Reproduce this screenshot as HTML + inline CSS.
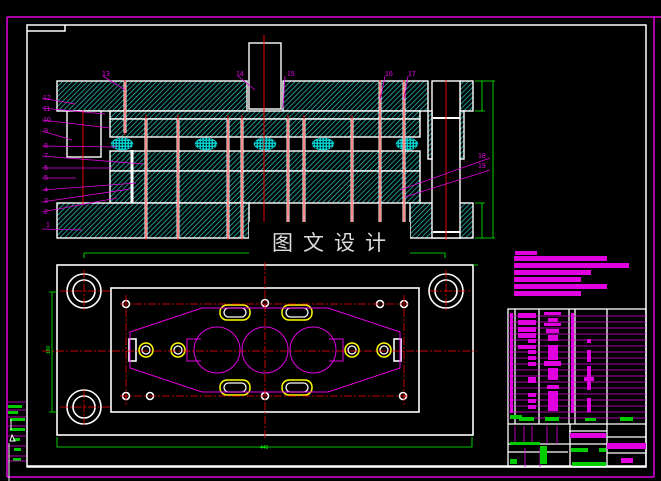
<!DOCTYPE html>
<html><head><meta charset="utf-8"><style>
html,body{margin:0;padding:0;background:#000;width:661px;height:481px;overflow:hidden}
svg{display:block}
</style></head><body>
<svg width="661" height="481" viewBox="0 0 661 481" xmlns="http://www.w3.org/2000/svg">
<defs>
<pattern id="h" width="3.5" height="3.5" patternUnits="userSpaceOnUse" patternTransform="rotate(45)">
<rect width="3.5" height="3.5" fill="#000"/><line x1="0" y1="0" x2="0" y2="3.5" stroke="#2cd0d0" stroke-width="1.4"/>
</pattern>
<pattern id="x" width="3" height="3" patternUnits="userSpaceOnUse">
<rect width="3" height="3" fill="#0cc"/><rect width="1.5" height="1.5" fill="#000"/>
</pattern>
</defs>
<rect width="661" height="481" fill="#000"/>
<path d="M7 17H661 M7 17V477 M7 477H654 M654 17V477" stroke="#e000e0" stroke-width="1.5" fill="none"/>
<rect x="27" y="25" width="619" height="442" fill="none" stroke="#fff" stroke-width="1.5"/>
<path d="M27 31H65V25" stroke="#fff" stroke-width="1.5" fill="none"/>
<g fill="#0c0"><rect x="8" y="405" width="14" height="3"/><rect x="8" y="411" width="10" height="3"/><rect x="10" y="418" width="15" height="3"/><rect x="10" y="428" width="15" height="3"/><rect x="13" y="438" width="7" height="3"/><rect x="14" y="448" width="7" height="3"/><rect x="13" y="458" width="8" height="3"/></g>
<path d="M8 402H26M8 410H26M8 417H26M8 426H26M8 436H26M8 446H26M8 456H26M8 461H26" stroke="#d0d" stroke-width="0.8"/>
<path d="M10 441H15L12 435Z M11 419V430" stroke="#fff" fill="none" stroke-width="1"/>
<path d="M9 443V481" stroke="#fff" stroke-width="1"/>

<g stroke="#fff" stroke-width="1.4">
<rect x="57" y="81" width="190" height="30" fill="url(#h)"/>
<rect x="283" y="81" width="145" height="30" fill="url(#h)"/>
<rect x="460" y="81" width="13" height="30" fill="url(#h)"/>
<rect x="110" y="111" width="310" height="8" fill="url(#h)"/>
<rect x="110" y="119" width="310" height="18" fill="url(#h)"/>
<rect x="110" y="151" width="310" height="20" fill="url(#h)"/>
<rect x="110" y="171" width="310" height="32" fill="url(#h)"/>
<rect x="57" y="203" width="192" height="35" fill="url(#h)"/>
<rect x="410" y="203" width="63" height="35" fill="url(#h)"/>
<rect x="67" y="111" width="34" height="46" fill="#000"/>
<rect x="249" y="43" width="32" height="66" fill="#000"/>
<rect x="432" y="81" width="28" height="157" fill="#000"/>
<rect x="428" y="111" width="4" height="48" fill="url(#h)"/>
<rect x="460" y="111" width="4" height="48" fill="url(#h)"/>
</g>
<path d="M433 118H460M433 232H460" stroke="#fff" stroke-width="2"/>
<g fill="url(#x)" stroke="#0dd" stroke-width="0.5">
<ellipse cx="122" cy="144" rx="11" ry="6"/><ellipse cx="206" cy="144" rx="11" ry="6"/><ellipse cx="265" cy="144" rx="11" ry="6"/><ellipse cx="323" cy="144" rx="11" ry="6"/><ellipse cx="407" cy="144" rx="11" ry="6"/>
</g>
<g stroke="#fff" stroke-width="3">
<path d="M125 82V133M146 119V238M178 119V238M228 119V238M242 119V238M288 119V238M304 119V238M352 119V238M380 82V238M404 82V238M132 150V203"/>
</g>
<g stroke="#f00" stroke-width="0.9">
<path d="M125 80V135M146 115V240M178 115V240M228 115V240M242 115V240M288 115V240M304 115V240M352 115V240M380 80V240M404 80V240M83 110V205M264 35V225M446 80V240"/>
</g>
<g stroke="#e000e0" stroke-width="0.8" fill="none">
<path d="M42 98L75 104M42 108L105 114M42 120L110 128M42 131L72 140M42 146L117 147M42 156L143 164M42 168L112 168M42 178L76 178M42 190L136 183M42 202L130 189M42 212L117 198M42 229L82 230M103 76L125 90M238 76L255 90M285 76L283 108M385 76L380 100M408 76L404 100M490 158L400 190M490 170L405 197"/>
</g>
<g fill="#e000e0" font-family="Liberation Sans,sans-serif" font-size="7">
<text x="43" y="100">12</text><text x="43" y="111">11</text><text x="43" y="122">10</text><text x="44" y="133">9</text><text x="44" y="148">8</text><text x="44" y="158">7</text><text x="44" y="170">6</text><text x="44" y="180">5</text><text x="44" y="192">4</text><text x="44" y="203">3</text><text x="44" y="214">2</text><text x="46" y="227">1</text>
<text x="102" y="76">13</text><text x="236" y="76">14</text><text x="287" y="76">15</text><text x="385" y="76">16</text><text x="408" y="76">17</text><text x="478" y="158">18</text><text x="478" y="168">19</text>
</g>
<g stroke="#0f0" stroke-width="0.8" fill="none"><path d="M475 81H495M475 111H485M475 203H485M475 238H495M493 81V238M482 81V111M482 203V238M84 258V253H249M410 253H445V258"/></g>
<rect x="249" y="222" width="161" height="36" fill="#000"/>
<text x="272" y="250" fill="#ddd" font-family="Liberation Sans,'Noto Sans CJK SC',sans-serif" font-size="21" letter-spacing="10">图文设计</text>

<g fill="none" stroke="#fff" stroke-width="1.6">
<rect x="57" y="265" width="416" height="170"/>
<rect x="111" y="288" width="308" height="124"/>
<circle cx="84" cy="291" r="17"/><circle cx="84" cy="291" r="11"/>
<circle cx="446" cy="291" r="17"/><circle cx="446" cy="291" r="11"/>
<circle cx="84" cy="407" r="17"/><circle cx="84" cy="407" r="11"/>
<circle cx="126" cy="304" r="3.5"/><circle cx="265" cy="303" r="3.5"/><circle cx="380" cy="304" r="3.5"/><circle cx="150" cy="396" r="3.5"/><circle cx="403" cy="396" r="3.5"/><circle cx="126" cy="396" r="3.5"/><circle cx="265" cy="396" r="3.5"/><circle cx="404" cy="304" r="3.5"/>
<rect x="129" y="339" width="7" height="22"/><rect x="394" y="339" width="7" height="22"/>
</g>
<g fill="none" stroke="#ff0" stroke-width="1.5">
<rect x="220" y="305" width="30" height="15" rx="7"/><rect x="282" y="305" width="30" height="15" rx="7"/>
<rect x="220" y="380" width="30" height="15" rx="7"/><rect x="282" y="380" width="30" height="15" rx="7"/>
<circle cx="146" cy="350" r="7"/><circle cx="178" cy="350" r="7"/><circle cx="352" cy="350" r="7"/><circle cx="384" cy="350" r="7"/>
</g>
<g fill="none" stroke="#fff" stroke-width="1.3">
<rect x="224" y="308" width="22" height="9" rx="4.5"/><rect x="286" y="308" width="22" height="9" rx="4.5"/>
<rect x="224" y="383" width="22" height="9" rx="4.5"/><rect x="286" y="383" width="22" height="9" rx="4.5"/>
<circle cx="146" cy="350" r="4"/><circle cx="178" cy="350" r="4"/><circle cx="352" cy="350" r="4"/><circle cx="384" cy="350" r="4"/>
</g>
<g fill="none" stroke="#e000e0" stroke-width="1">
<path d="M130 332L202 308H328L400 332V368L328 392H202L130 368Z"/>
<circle cx="217" cy="350" r="23"/><circle cx="265" cy="350" r="23"/><circle cx="313" cy="350" r="23"/>
<path d="M201 339H187V361H201M329 339H343V361H329"/>
</g>
<g stroke="#f00" stroke-width="0.8" stroke-dasharray="8 2 2 2">
<path d="M42 351H477M265 262V440M120 304H410M120 396H410M126 295V405M404 295V405M84 270V310M60 291H110M430 291H470M446 270V310M84 390V425M60 407H110"/>
</g>
<g stroke="#0f0" stroke-width="0.8" fill="none"><path d="M52 292V412M49 292H57M49 412H57M57 437V447H472V437M473 265H478"/></g>
<text x="50" y="354" fill="#0f0" font-size="5" font-family="Liberation Sans,sans-serif" transform="rotate(-90 50 354)">180</text>
<text x="260" y="449" fill="#0f0" font-size="5" font-family="Liberation Sans,sans-serif">440</text>
<path d="M27 466H646" stroke="#fff" stroke-width="1.5"/>

<g fill="#e000e0">
<rect x="515" y="251" width="22" height="4"/>
<rect x="514" y="256" width="93" height="5"/><rect x="514" y="263" width="115" height="5"/><rect x="514" y="270" width="77" height="5"/><rect x="514" y="277" width="67" height="5"/><rect x="514" y="284" width="93" height="5"/><rect x="514" y="291" width="67" height="5"/>
</g>
<g fill="none" stroke="#fff" stroke-width="1.3">
<rect x="508" y="309" width="138" height="158"/>
<path d="M515 309V424M539 309V424M569 309V424M575 309V424M607 309V424M508 424H646M508 444H646M508 452H568M569 431H607M607 437H646M607 453H646M570 424V467M607 424V467"/>
</g>
<g stroke="#e000e0" stroke-width="0.8">
<path d="M508 316H646M508 322H646M508 328H646M508 334H646M508 340H646M508 346H646M508 352H646M508 358H646M508 364H646M508 370H646M508 376H646M508 382H646M508 388H646M508 394H646M508 400H646M508 406H646M508 412H646M508 418H646"/>
<path d="M515 426V444M524 426V444M532 426V444M547 426V444M557 426V444M525 448V467M540 448V467"/>
</g>
<g fill="#e000e0">
<rect x="518" y="313" width="18" height="5"/><rect x="518" y="320" width="18" height="5"/><rect x="518" y="327" width="18" height="5"/><rect x="518" y="333" width="18" height="5"/><rect x="528" y="339" width="8" height="4"/><rect x="518" y="345" width="18" height="4"/><rect x="528" y="350" width="8" height="4"/><rect x="528" y="356" width="8" height="4"/><rect x="528" y="362" width="8" height="4"/><rect x="528" y="377" width="8" height="6"/><rect x="528" y="393" width="8" height="4"/><rect x="528" y="399" width="8" height="4"/><rect x="528" y="405" width="8" height="4"/>
<rect x="544" y="312" width="17" height="3"/><rect x="548" y="318" width="10" height="4"/><rect x="544" y="323" width="17" height="3"/><rect x="546" y="329" width="13" height="4"/><rect x="548" y="335" width="10" height="6"/><rect x="548" y="345" width="10" height="15"/><rect x="544" y="361" width="17" height="5"/><rect x="548" y="368" width="10" height="12"/><rect x="547" y="385" width="12" height="4"/><rect x="548" y="391" width="10" height="20"/>
<rect x="510" y="313" width="3" height="100"/><rect x="571" y="313" width="3" height="100"/>
<rect x="587" y="339" width="4" height="4"/><rect x="587" y="350" width="4" height="12"/><rect x="587" y="366" width="4" height="24"/><rect x="584" y="377" width="10" height="4"/><rect x="587" y="398" width="4" height="14"/>
<rect x="570" y="433" width="36" height="5"/><rect x="607" y="443" width="39" height="6"/><rect x="621" y="458" width="12" height="5"/>
</g>
<g fill="#0c0">
<rect x="510" y="415" width="12" height="4"/><rect x="519" y="417" width="15" height="4"/><rect x="545" y="417" width="14" height="4"/><rect x="585" y="418" width="11" height="3"/><rect x="620" y="417" width="13" height="4"/>
<rect x="510" y="442" width="30" height="3"/><rect x="540" y="446" width="7" height="18"/><rect x="510" y="459" width="7" height="5"/>
<rect x="571" y="448" width="17" height="4"/><rect x="599" y="448" width="7" height="4"/><rect x="572" y="462" width="34" height="4"/>
</g>
</svg>
</body></html>
